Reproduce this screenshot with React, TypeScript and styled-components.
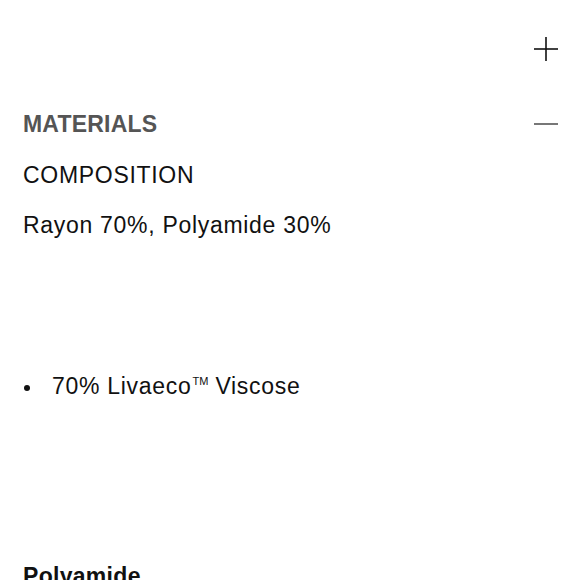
import styled, { createGlobalStyle } from "styled-components";

const GlobalStyle = createGlobalStyle`
  html, body {
    margin: 0;
    padding: 0;
    background: #ffffff;
  }
  body {
    font-family: "Liberation Sans", Arial, sans-serif;
    color: #111111;
    -webkit-font-smoothing: antialiased;
  }
`;

const Toggle = ({ open }: { open: boolean }) => (
  <IconBox aria-hidden>
    <svg width="24" height="24" viewBox="0 0 24 24">
      <line
        x1="0"
        y1="12"
        x2="24"
        y2="12"
        stroke={open ? "#555555" : "#111111"}
        strokeWidth="1.6"
      />
      {!open && (
        <line x1="12" y1="0" x2="12" y2="24" stroke="#111111" strokeWidth="1.6" />
      )}
    </svg>
  </IconBox>
);

export default function App() {
  return (
    <>
      <GlobalStyle />
      <Page>
        <Section>
          <Header $height={98}>
            <Title $open={false} />
            <Toggle open={false} />
          </Header>
        </Section>
        <Section>
          <Header $height={52}>
            <Title $open>MATERIALS</Title>
            <Toggle open />
          </Header>
          <Body>
            <Line>COMPOSITION</Line>
            <Line>Rayon 70%, Polyamide 30%</Line>
            <Spacer $h={111} />
            <List>
              <Item>
                70% Livaeco<Trademark>TM</Trademark> Viscose
              </Item>
            </List>
            <Spacer $h={152} />
            <SubHeading>Polyamide</SubHeading>
          </Body>
        </Section>
      </Page>
    </>
  );
}

const Page = styled.div`
  width: 100%;
  height: 580px;
  overflow: hidden;
  box-sizing: border-box;
  padding: 0 21px 0 23px;
`;

const Section = styled.section`
  display: flex;
  flex-direction: column;
`;

const Header = styled.div<{ $height: number }>`
  height: ${(p) => p.$height}px;
  display: flex;
  align-items: center;
  justify-content: space-between;
`;

const Title = styled.h2<{ $open: boolean }>`
  margin: 0;
  font-size: 23px;
  font-weight: 700;
  letter-spacing: 0.2px;
  color: ${(p) => (p.$open ? "#555555" : "#111111")};
`;

const IconBox = styled.span`
  display: flex;
  width: 24px;
  height: 24px;
`;

const Body = styled.div`
  display: flex;
  flex-direction: column;
`;

const Line = styled.p`
  margin: 0;
  height: 50px;
  display: flex;
  align-items: center;
  font-size: 23px;
  letter-spacing: 0.7px;
  color: #111111;
`;

const Spacer = styled.div<{ $h: number }>`
  height: ${(p) => p.$h}px;
  flex: none;
`;

const List = styled.ul`
  margin: 0;
  padding: 0;
  list-style: none;
`;

const Item = styled.li`
  position: relative;
  padding-left: 29px;
  height: 50px;
  display: flex;
  align-items: center;
  font-size: 23px;
  letter-spacing: 0.7px;
  color: #111111;
  white-space: pre;

  &::before {
    content: "";
    position: absolute;
    left: 1px;
    top: 50%;
    width: 6px;
    height: 6px;
    margin-top: -1px;
    border-radius: 50%;
    background: #111111;
  }
`;

const Trademark = styled.span`
  font-size: 11px;
  letter-spacing: 0;
  align-self: flex-start;
  margin-top: 14px;
  margin-left: 1px;
`;

const SubHeading = styled.h3`
  margin: 0;
  font-size: 23px;
  font-weight: 700;
  letter-spacing: 0.3px;
  color: #111111;
`;
